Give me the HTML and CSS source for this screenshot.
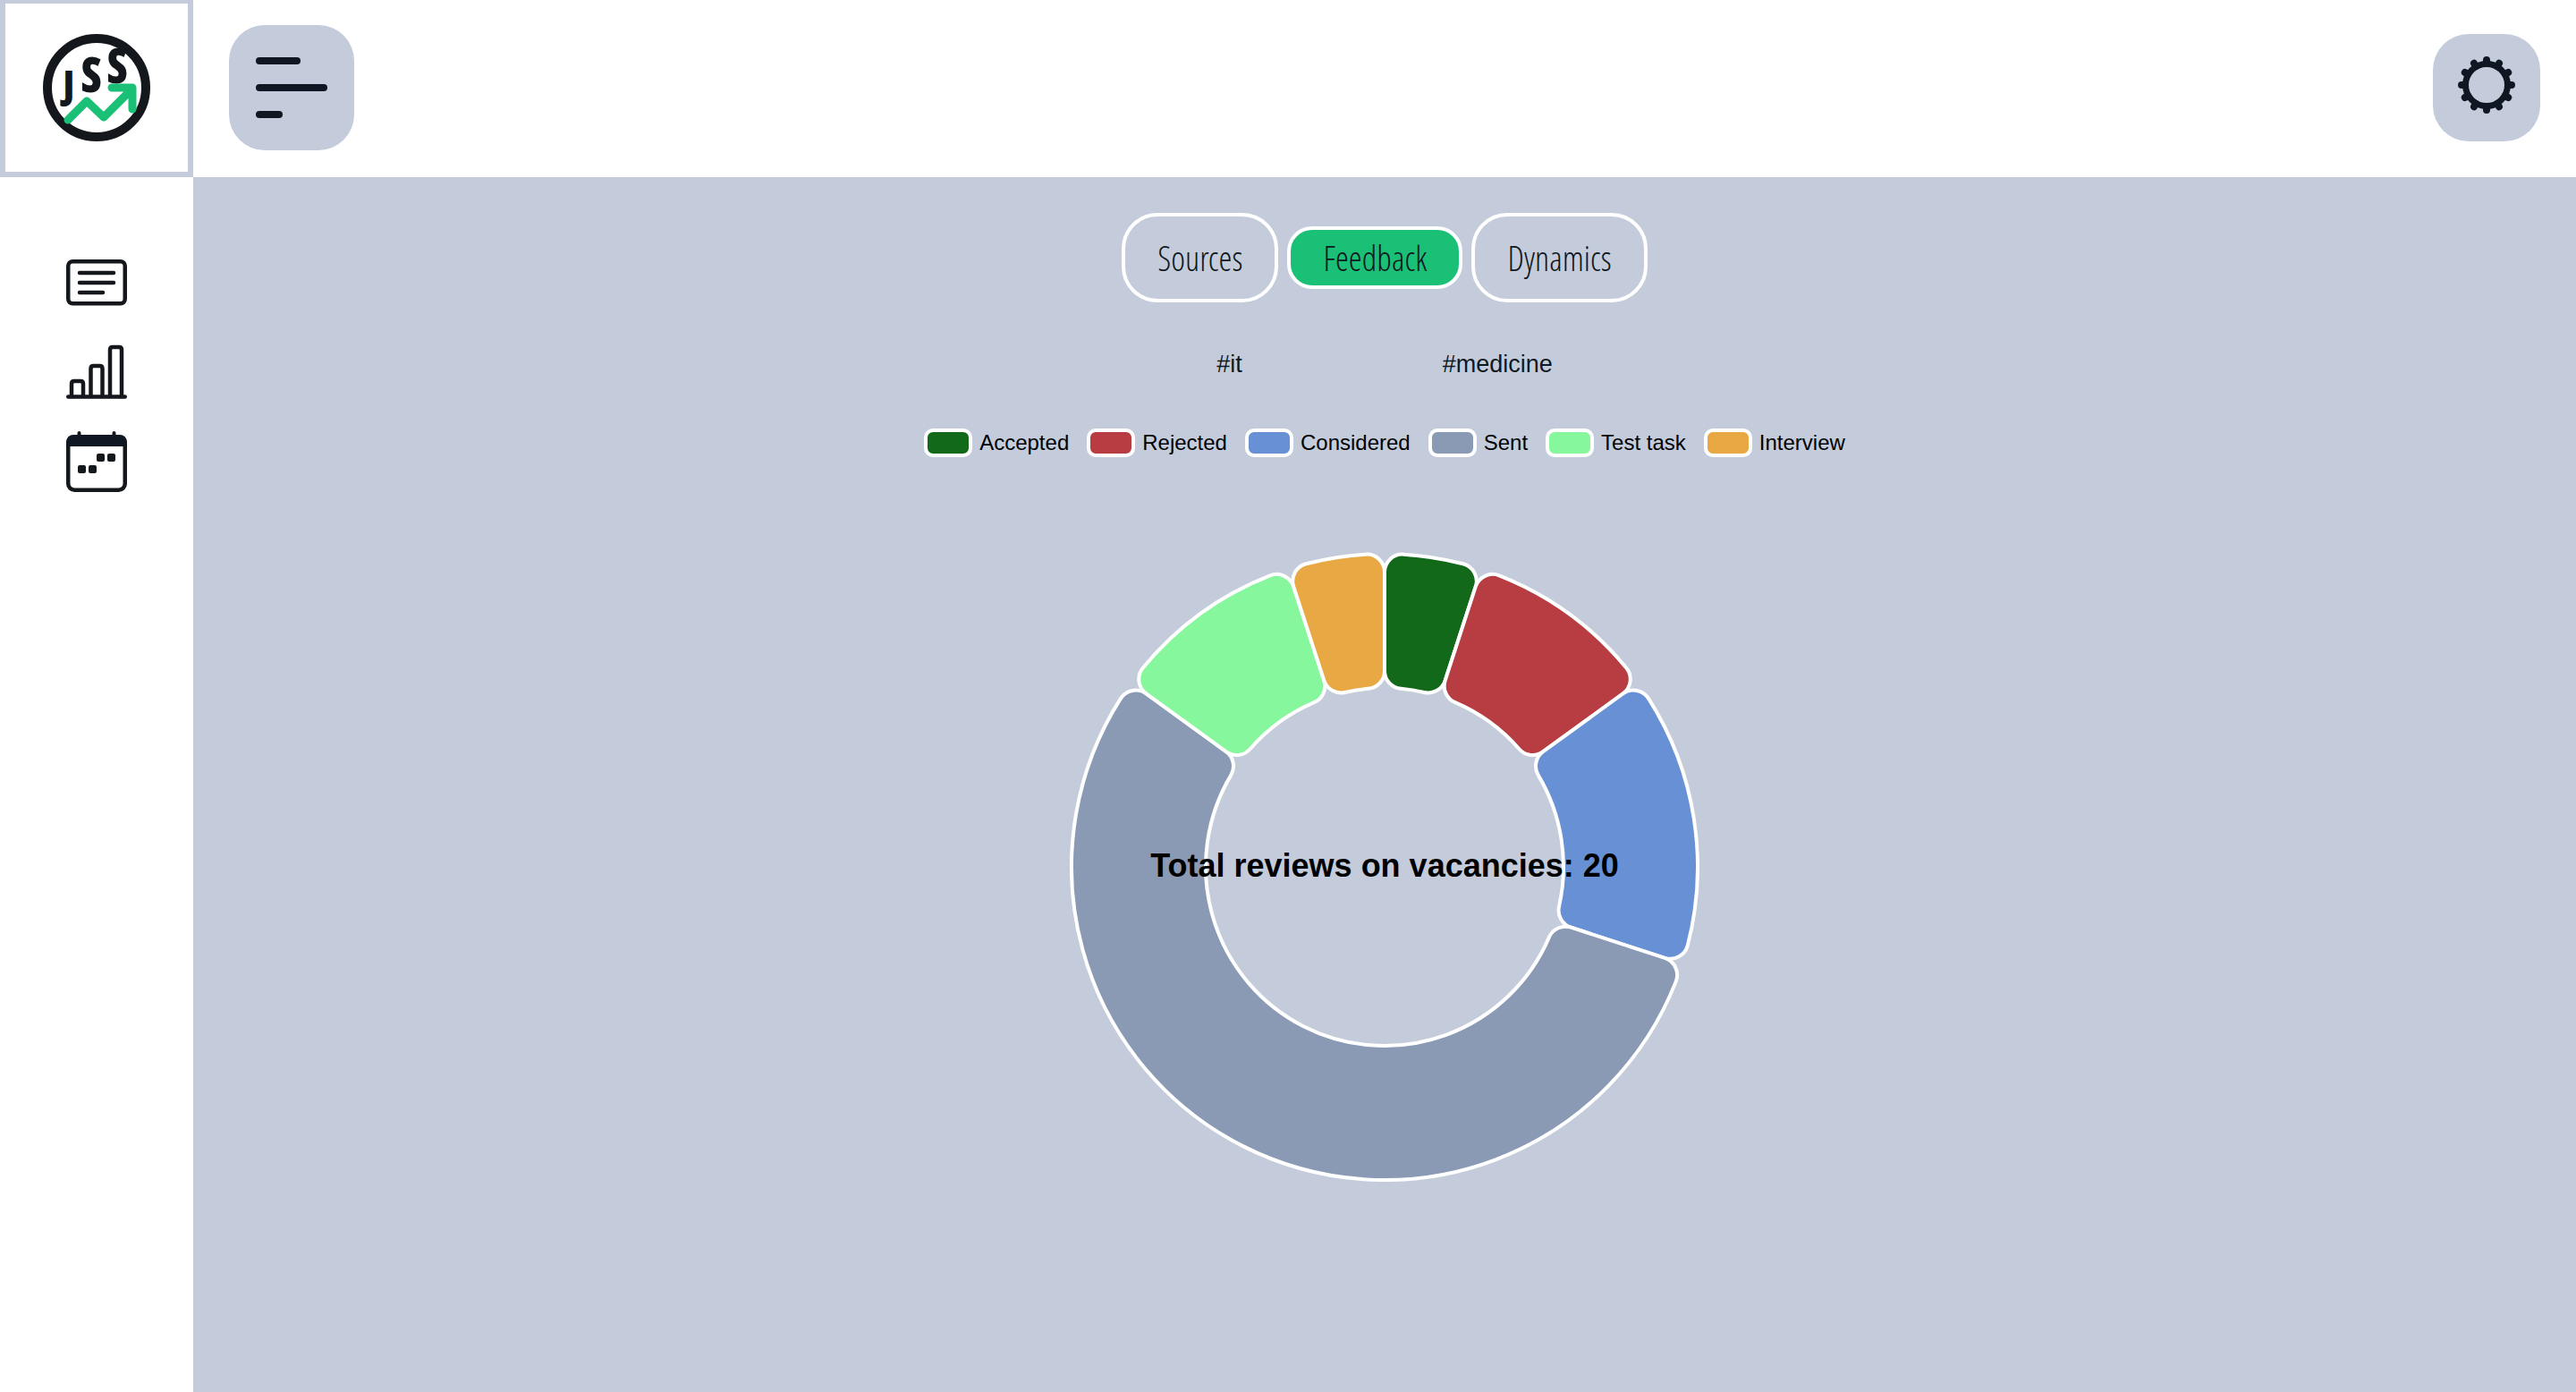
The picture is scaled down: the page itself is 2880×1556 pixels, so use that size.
FILE: index.html
```html
<!DOCTYPE html>
<html lang="en">
<head>
<meta charset="utf-8">
<meta name="viewport" content="width=device-width, initial-scale=1">
<title>JSS – Feedback</title>
<link rel="stylesheet" href="styles.css">
</head>
<body>
<div class="app">
  <a class="logo" href="#" aria-label="JSS home">
    <svg width="120" height="120" viewBox="0 0 120 120">
      <circle cx="60" cy="60" r="55" fill="none" stroke="#14181d" stroke-width="10"/>
      <g class="logo-text">
        <text class="logo-initial" x="29" y="72">J</text>
        <text x="54" y="64">S</text>
        <text x="83" y="54">S</text>
      </g>
      <path d="M28 96 49 75 68 93 100 61M77 60H100V84" fill="none" stroke="#1bc077" stroke-width="9" stroke-linecap="round" stroke-linejoin="round"/>
    </svg>
  </a>

  <header class="topbar">
    <button class="menu-button" type="button" aria-label="Menu">
      <span class="bar bar-medium"></span>
      <span class="bar bar-long"></span>
      <span class="bar bar-short"></span>
    </button>
    <button class="settings-button" type="button" aria-label="Settings">
      <svg width="64" height="64" viewBox="-32 -32 64 64" fill="none" stroke="#0f1822">
        <circle r="23.500" stroke-width="7"/>
        <path stroke-width="8" stroke-linecap="round" d="M24 0H28M-24 0H-28M0 24V28M0-24V-28M20.8 12 24.2 14M20.8-12 24.2-14M-20.8 12-24.2 14M-20.8-12-24.2-14M12 20.8 14 24.2M12-20.8 14-24.2M-12 20.8-14 24.2M-12-20.8-14-24.2"/>
      </svg>
    </button>
  </header>

  <nav class="sidebar">
    <a class="nav-link" href="#" aria-label="Vacancies">
      <svg width="68" height="68" viewBox="0 0 68 68" fill="none" stroke="#14181d" stroke-width="4.500" stroke-linecap="round">
        <rect x="2.250" y="10.250" width="63.500" height="47" rx="5"/>
        <path d="M15 23H53M15 34H53M15 45H41"/>
      </svg>
    </a>
    <a class="nav-link" href="#" aria-label="Statistics">
      <svg width="68" height="68" viewBox="0 0 68 68" fill="none" stroke="#14181d" stroke-width="4.500" stroke-linecap="round">
        <path d="M2.250 61.500H65.750M6 61V47Q6 44 9 44H16Q19 44 19 47V61M27.500 61V30Q27.500 27 30.500 27H37.500Q40.500 27 40.500 30V61M49 61V9Q49 6 52 6H59Q62 6 62 9V61"/>
      </svg>
    </a>
    <a class="nav-link" href="#" aria-label="Calendar">
      <svg width="68" height="68" viewBox="0 0 68 68">
        <rect x="2.250" y="6.250" width="63.500" height="59.500" rx="7" fill="none" stroke="#14181d" stroke-width="4.500"/>
        <path d="M0 17V13Q0 4 9 4H59Q68 4 68 13V17Z" fill="#0f1822"/>
        <path d="M14.500 2V8M53.500 2V8" stroke="#14181d" stroke-width="4" stroke-linecap="round"/>
        <g fill="#14181d"><rect x="34" y="25" width="9" height="9" rx="2"/><rect x="46" y="25" width="9" height="9" rx="2"/><rect x="13" y="38" width="9" height="9" rx="2"/><rect x="25" y="38" width="9" height="9" rx="2"/></g>
      </svg>
    </a>
  </nav>

  <main class="content">
    <div class="tabs">
      <button class="tab" type="button">Sources</button>
      <button class="tab tab-active" type="button">Feedback</button>
      <button class="tab" type="button">Dynamics</button>
    </div>
    <div class="tags">
      <button class="tag" type="button">#it</button>
      <button class="tag" type="button">#medicine</button>
    </div>
    <ul class="legend">
      <li class="legend-item"><span class="swatch accepted"></span>Accepted</li>
      <li class="legend-item"><span class="swatch rejected"></span>Rejected</li>
      <li class="legend-item"><span class="swatch considered"></span>Considered</li>
      <li class="legend-item"><span class="swatch sent"></span>Sent</li>
      <li class="legend-item"><span class="swatch test-task"></span>Test task</li>
      <li class="legend-item"><span class="swatch interview"></span>Interview</li>
    </ul>
    <svg class="chart" viewBox="-352 -352 704 704" role="img" aria-label="Reviews by status">
      <g id="slices"></g>
      <text class="chart-total" x="0" y="11">Total reviews on vacancies: 20</text>
    </svg>
  </main>
</div>
<script src="chart.js"></script>
</body>
</html>
```
FILE: styles.css
```css
* {
  box-sizing: border-box;
}

body {
  margin: 0;
  background: #fff;
  color: #101820;
  font-family: "Liberation Sans", Arial, sans-serif;
}

button {
  padding: 0;
  border: 0;
  background: none;
  color: inherit;
  font: inherit;
  cursor: pointer;
}

.app {
  display: grid;
  grid-template-columns: 216px 1fr;
  grid-template-rows: 198px 1fr;
  min-height: 100vh;
}

.logo {
  display: flex;
  align-items: center;
  justify-content: center;
  border: 6px solid #c4ccdb;
  border-top-width: 4px;
}

.logo-text {
  fill: #14181d;
  stroke: #14181d;
  stroke-width: 2px;
  font: bold 52px "Open Sans Condensed", "Roboto Condensed", sans-serif;
  text-anchor: middle;
}

.logo-initial {
  font-size: 42px;
}

.topbar {
  display: flex;
  align-items: center;
  justify-content: space-between;
  padding: 0 40px 2px;
}

.menu-button {
  display: flex;
  flex-direction: column;
  justify-content: center;
  gap: 22px;
  width: 140px;
  height: 140px;
  padding: 0 30px;
  border-radius: 40px;
  background: #c4ccdb;
}

.bar {
  height: 8px;
  border-radius: 4px;
  background: #0f1822;
}

.bar-medium {
  width: 50px;
}

.bar-long {
  width: 80px;
}

.bar-short {
  width: 30px;
}

.settings-button {
  display: flex;
  align-items: center;
  justify-content: center;
  width: 120px;
  height: 120px;
  padding-bottom: 6px;
  border-radius: 40px;
  background: #c4ccdb;
}

.sidebar {
  display: flex;
  flex-direction: column;
  align-items: center;
  gap: 32px;
  padding-top: 84px;
}

.nav-link,
.nav-link svg {
  display: block;
}

.content {
  display: flex;
  flex-direction: column;
  align-items: center;
  padding: 40px;
  background: #c4ccdb;
}

.tabs {
  display: flex;
  align-items: center;
  gap: 10px;
}

.tab {
  height: 100px;
  padding: 0 36px;
  border: 4px solid #fff;
  border-radius: 40px;
  font: 300 38px/48px "Open Sans Condensed Light", "Roboto Condensed", sans-serif;
}

.tab-active {
  height: 70px;
  border-radius: 28px;
  background: #1bc077;
}

.tags {
  display: flex;
  gap: 224px;
  margin-top: 53px;
}

.tag {
  font-size: 27px;
  line-height: 32px;
}

.legend {
  display: flex;
  gap: 20px;
  margin: 56px 0 0;
  padding: 0;
  list-style: none;
  color: #000;
  font-size: 24px;
  line-height: 32px;
}

.legend-item {
  display: flex;
  gap: 8px;
}

.swatch {
  width: 54px;
  height: 32px;
  border: 4px solid #fff;
  border-radius: 10px;
}

.accepted {
  background: #12691a;
  fill: #12691a;
}

.rejected {
  background: #b73d42;
  fill: #b73d42;
}

.considered {
  background: #6891d5;
  fill: #6891d5;
}

.sent {
  background: #8a9ab5;
  fill: #8a9ab5;
}

.test-task {
  background: #86f79c;
  fill: #86f79c;
}

.interview {
  background: #e8a944;
  fill: #e8a944;
}

.chart {
  width: 704px;
  max-width: 100%;
  margin-top: 106px;
}

.slice {
  stroke: #fff;
  stroke-width: 4px;
}

.chart-total {
  fill: #000;
  font-size: 36px;
  font-weight: bold;
  text-anchor: middle;
}
```
FILE: chart.js
```js
const reviews = [
  ["accepted", 1],
  ["rejected", 2],
  ["considered", 3],
  ["sent", 11],
  ["test-task", 2],
  ["interview", 1],
];

const OUTER = 350;
const INNER = 200;
const CORNER = 20;

// Angles run clockwise from twelve o'clock.
function point(radius, angle) {
  return (radius * Math.sin(angle)).toFixed(2) + " " + (-radius * Math.cos(angle)).toFixed(2);
}

function slicePath(start, end) {
  const outerTurn = Math.asin(CORNER / (OUTER - CORNER));
  const innerTurn = Math.asin(CORNER / (INNER + CORNER));
  const outerEdge = (OUTER - CORNER) * Math.cos(outerTurn);
  const innerEdge = (INNER + CORNER) * Math.cos(innerTurn);
  const corner = `A${CORNER} ${CORNER} 0 0 1 `;
  const large = (turn) => (end - start - 2 * turn > Math.PI ? 1 : 0);
  return [
    "M" + point(outerEdge, start),
    corner + point(OUTER, start + outerTurn),
    `A${OUTER} ${OUTER} 0 ${large(outerTurn)} 1 ` + point(OUTER, end - outerTurn),
    corner + point(outerEdge, end),
    "L" + point(innerEdge, end),
    corner + point(INNER, end - innerTurn),
    `A${INNER} ${INNER} 0 ${large(innerTurn)} 0 ` + point(INNER, start + innerTurn),
    corner + point(innerEdge, start),
    "Z",
  ].join("");
}

const total = reviews.reduce((sum, [, count]) => sum + count, 0);
const group = document.getElementById("slices");
let angle = 0;

for (const [status, count] of reviews) {
  const next = angle + (count / total) * 2 * Math.PI;
  const path = document.createElementNS("http://www.w3.org/2000/svg", "path");
  path.setAttribute("class", "slice " + status);
  path.setAttribute("d", slicePath(angle, next));
  group.appendChild(path);
  angle = next;
}
```
